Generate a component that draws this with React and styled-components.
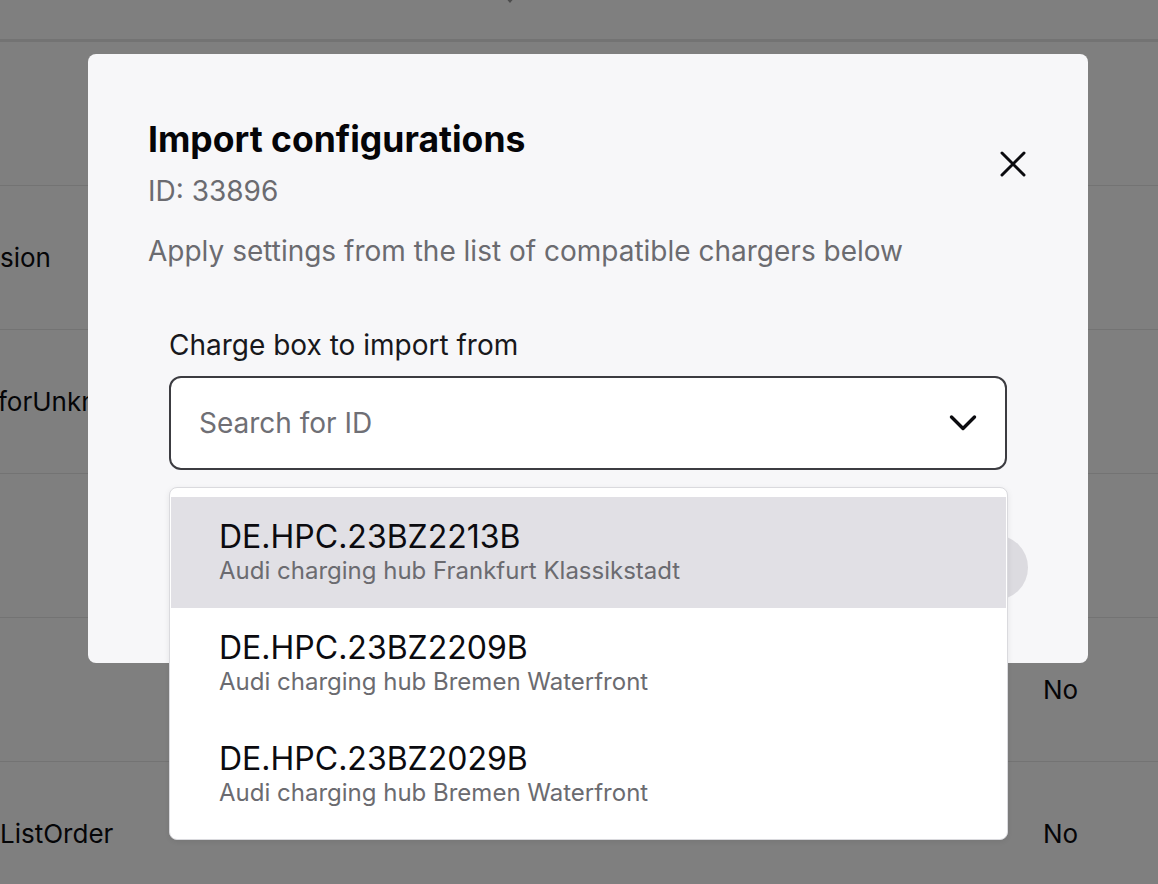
import React from 'react'
import styled, { createGlobalStyle } from 'styled-components'

const GlobalStyle = createGlobalStyle`
  body {
    margin: 0;
    font-family: Inter, "Noto Sans", sans-serif;
    background: #ffffff;
    color: #0b0b0f;
  }
`;

// background table
const Page = styled.div`
  width: 1158px;
  height: 884px;
  overflow: hidden;
`;

const TableHead = styled.div`
  height: 39px;
  border-bottom: 3px solid #e6e6e6;
  display: flex;
  overflow: hidden;
`;

const SortIcon = styled.svg`
  margin-top: -10px;
  margin-left: 500px;
`;

const Row = styled.div`
  display: grid;
  grid-template-columns: 1043px 1fr;
  align-items: center;
  height: 143px;
  border-bottom: 1px solid #e6e6e6;
  font-size: 26px;
  color: #0b0b0f;
`;

const NameCell = styled.div`
  margin-left: ${p => p.shift || 0}px;
  white-space: nowrap;
`;

// modal
const Overlay = styled.div`
  position: fixed;
  inset: 0;
  background: rgba(0, 0, 0, 0.5);
  display: flex;
  justify-content: center;
  align-items: flex-start;
  padding: 54px 0 0 18px;
`;

const Modal = styled.div`
  width: 1000px;
  box-sizing: border-box;
  background: #f7f7f9;
  border-radius: 8px;
  padding: 64px 60px 63px;
`;

const Header = styled.div`
  display: flex;
  justify-content: space-between;
  align-items: flex-start;
`;

const Title = styled.h2`
  margin: 0;
  font-size: 35.5px;
  line-height: 44px;
  font-weight: 700;
  color: #050508;
`;

const Muted = styled.p`
  margin: ${p => p.gap}px 0 0;
  font-size: 28px;
  line-height: 34px;
  color: #6b6b70;
`;

const CloseButton = styled.button`
  border: 0;
  background: none;
  padding: 0;
  margin-top: 33px;
  margin-right: 2px;
  width: 26px;
  height: 26px;
  display: flex;
  cursor: pointer;
`;

const Form = styled.div`
  margin-top: 60px;
  padding: 0 21px;
`;

const Label = styled.label`
  display: block;
  font-size: 28px;
  line-height: 34px;
  color: #18181c;
`;

const Field = styled.div`
  position: relative;
  margin-top: 14px;
`;

const SelectBox = styled.div`
  height: 94px;
  box-sizing: border-box;
  border: 2px solid #3c3c41;
  border-radius: 12px;
  background: #ffffff;
  display: flex;
  align-items: center;
  justify-content: space-between;
  padding: 0 28px 0 28px;
  font-size: 28px;
  color: #6f6f75;
`;

const Menu = styled.div`
  position: absolute;
  top: calc(100% + 17px);
  left: 0;
  right: -1px;
  z-index: 2;
  background: #ffffff;
  border: 1px solid #dadade;
  border-radius: 8px;
  box-shadow: 0 2px 6px rgba(0, 0, 0, 0.08);
  padding: 9px 1px 9px;
`;

const Option = styled.div`
  height: 111px;
  box-sizing: border-box;
  padding: 22px 0 0 48px;
  background: ${p => (p.active ? '#e1e0e5' : '#ffffff')};
`;

const OptionId = styled.div`
  font-size: 32px;
  line-height: 36px;
  color: #0b0b0f;
`;

const OptionName = styled.div`
  margin-top: 2px;
  font-size: 24px;
  line-height: 28px;
  color: #6b6b70;
`;

const Footer = styled.div`
  display: flex;
  justify-content: flex-end;
  margin-top: 65px;
`;

const ImportButton = styled.button`
  height: 65px;
  padding: 0 48px;
  border: 0;
  border-radius: 33px;
  background: #dcdbe0;
  color: #9b9ba1;
  font-family: inherit;
  font-size: 26px;
`;

const rows = [
  { name: '', value: 'No' },
  { name: 'sion', value: 'No' },
  { name: 'forUnknownId', value: 'No', shift: -2 },
  { name: '', value: 'No' },
  { name: '', value: 'No' },
  { name: 'ListOrder', value: 'No' },
];

const chargers = [
  { id: 'DE.HPC.23BZ2213B', name: 'Audi charging hub Frankfurt Klassikstadt' },
  { id: 'DE.HPC.23BZ2209B', name: 'Audi charging hub Bremen Waterfront' },
  { id: 'DE.HPC.23BZ2029B', name: 'Audi charging hub Bremen Waterfront' },
];

export default function App() {
  return (
    <>
      <GlobalStyle />
      <Page>
        <TableHead>
          <SortIcon width="20" height="16" viewBox="0 0 20 16">
            <path d="M4 6 L10 13 L16 6 Z" fill="#9a9a9a" />
          </SortIcon>
        </TableHead>
        {rows.map((row, i) => (
          <Row key={i}>
            <NameCell shift={row.shift}>{row.name}</NameCell>
            <div>{row.value}</div>
          </Row>
        ))}
      </Page>

      <Overlay>
        <Modal>
          <Header>
            <div>
              <Title>Import configurations</Title>
              <Muted gap={12}>ID: 33896</Muted>
              <Muted gap={26}>Apply settings from the list of compatible chargers below</Muted>
            </div>
            <CloseButton aria-label="Close">
              <svg width="26" height="26" viewBox="0 0 26 26">
                <path d="M2 2 L24 24 M24 2 L2 24" stroke="#0b0b0f" strokeWidth="3" strokeLinecap="round" />
              </svg>
            </CloseButton>
          </Header>

          <Form>
            <Label>Charge box to import from</Label>
            <Field>
              <SelectBox>
                <span>Search for ID</span>
                <svg width="28" height="18" viewBox="0 0 28 18">
                  <path d="M2.5 3 L14 14.5 L25.5 3" fill="none" stroke="#0b0b0f" strokeWidth="3.4" strokeLinecap="round" strokeLinejoin="round" />
                </svg>
              </SelectBox>
              <Menu>
                {chargers.map((c, i) => (
                  <Option key={c.id} active={i === 0}>
                    <OptionId>{c.id}</OptionId>
                    <OptionName>{c.name}</OptionName>
                  </Option>
                ))}
              </Menu>
            </Field>
          </Form>
          <Footer>
            <ImportButton>Import</ImportButton>
          </Footer>
        </Modal>
      </Overlay>
    </>
  )
}
